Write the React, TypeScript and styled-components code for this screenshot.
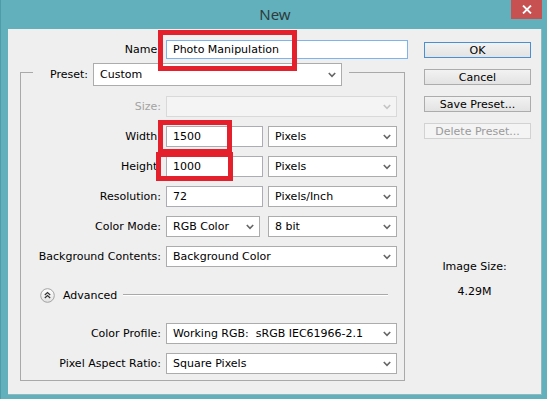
import React from 'react';
import styled, { createGlobalStyle } from 'styled-components';

const Global = createGlobalStyle`
  html, body { margin: 0; padding: 0; }
  body {
    background: #61b0bc;
    font-family: "DejaVu Sans", Verdana, sans-serif;
    font-size: 11px;
    color: #000;
  }
`;

const Frame = styled.div`
  width: 547px;
  height: 399px;
  box-sizing: border-box;
  background: #61b0bc;
  border-left: 1px solid #4f9ca8;
  padding: 0 5px 4px 7px;
  display: flex;
  flex-direction: column;
`;

const TitleBar = styled.div`
  height: 29px;
  flex: none;
  display: grid;
  grid-template-columns: 1fr auto 1fr;
  align-items: start;
`;

const Title = styled.div`
  grid-column: 2;
  font-family: "Noto Sans", "Open Sans", sans-serif;
  font-size: 15px;
  line-height: 20px;
  padding-top: 4px;
  color: #2f3b3d;
`;

const CloseButton = styled.div`
  grid-column: 3;
  justify-self: end;
  width: 31px;
  height: 19px;
  background: #c75050;
  display: flex;
  align-items: center;
  justify-content: center;
`;

const Client = styled.div`
  flex: 1;
  background: #efefef;
  border-right: 1px solid #8fb9bf;
  border-bottom: 1px solid #8fb9bf;
  display: flex;
  gap: 16px;
`;

const LeftColumn = styled.div`
  width: 400px;
  padding-left: 12px;
  box-sizing: border-box;
  display: flex;
  flex-direction: column;
`;

const NameRow = styled.div`
  margin-top: 11px;
  display: grid;
  grid-template-columns: 141px 242px;
  column-gap: 5px;
  align-items: center;
`;

const Label = styled.div<{ $disabled?: boolean }>`
  text-align: right;
  white-space: nowrap;
  color: ${p => (p.$disabled ? '#a3a3a3' : '#000')};
`;

const Marked = styled.div`
  position: relative;
`;

const Highlight = styled.span<{ $l: number; $t: number; $w: number; $h: number }>`
  position: absolute;
  left: ${p => p.$l}px;
  top: ${p => p.$t}px;
  width: ${p => p.$w}px;
  height: ${p => p.$h}px;
  box-sizing: border-box;
  border: 5px solid #e3202b;
  pointer-events: none;
`;

const TextInput = styled.input<{ $w?: number; $h?: number; $focus?: boolean }>`
  display: block;
  box-sizing: border-box;
  width: ${p => (p.$w ? `${p.$w}px` : '100%')};
  height: ${p => p.$h ?? 21}px;
  margin: 0;
  padding: 0 0 0 6px;
  border: 1px solid ${p => (p.$focus ? '#7eb4ea' : '#abadb3')};
  background: #fff;
  font-family: "DejaVu Sans", Verdana, sans-serif;
  font-size: 11px;
  color: #000;
  outline: none;
`;

const SelectBox = styled.div<{ $w?: number; $h?: number; $disabled?: boolean }>`
  box-sizing: border-box;
  width: ${p => (p.$w ? `${p.$w}px` : '100%')};
  height: ${p => p.$h ?? 21}px;
  display: flex;
  align-items: center;
  justify-content: space-between;
  padding: 0 5px 0 6px;
  background: ${p => (p.$disabled ? '#f4f4f4' : '#fff')};
  border: 1px solid ${p => (p.$disabled ? '#d9d9d9' : '#acacac')};
  white-space: pre;
`;

const Chevron = ({ light }: { light?: boolean }) => (
  <svg width="8" height="6" viewBox="0 0 8 6">
    <polyline
      points="0.8,1 4,4.4 7.2,1"
      fill="none"
      stroke={light ? '#c4c4c4' : '#666'}
      strokeWidth="1.6"
    />
  </svg>
);

const Select = ({ value, w, h, disabled }: { value: string; w?: number; h?: number; disabled?: boolean }) => (
  <SelectBox $w={w} $h={h} $disabled={disabled}>
    <span>{value}</span>
    <Chevron light={disabled} />
  </SelectBox>
);

const Group = styled.fieldset`
  margin: -1px 0 0 0;
  padding: 10px 7px 6px 0;
  width: 385px;
  box-sizing: border-box;
  border: 1px solid #a9a9a9;
  min-width: 0;
`;

const Legend = styled.legend`
  margin-left: 12px;
  padding: 5px 7px 0 17px;
  display: flex;
  align-items: center;
  gap: 5px;
`;

const Rows = styled.div`
  display: flex;
  flex-direction: column;
  gap: 9px;
`;

const FieldRow = styled.div`
  display: grid;
  grid-template-columns: 140px 231px;
  column-gap: 5px;
  align-items: center;
  height: 21px;
`;

const Pair = styled.div`
  display: flex;
  justify-content: space-between;
  align-items: center;
`;

const AdvancedRow = styled.div`
  height: 16px;
  margin: 11px 9px 11px 19px;
  display: flex;
  align-items: center;
`;

const AdvancedText = styled.span`
  margin-left: 8px;
  margin-right: 6px;
`;

const Rule = styled.div`
  flex: 1;
  height: 0;
  border-top: 1px solid #a9a9a9;
  border-bottom: 1px solid #fff;
`;

const RightColumn = styled.div`
  width: 107px;
  padding-top: 13px;
  display: flex;
  flex-direction: column;
`;

const Buttons = styled.div`
  display: flex;
  flex-direction: column;
  gap: 11px;
`;

const Button = styled.div<{ $default?: boolean; $disabled?: boolean }>`
  height: 16px;
  box-sizing: border-box;
  display: flex;
  align-items: center;
  justify-content: center;
  border: 1px solid ${p => (p.$default ? '#4b8fd1' : p.$disabled ? '#d2d2d2' : '#acacac')};
  background: ${p => (p.$disabled ? '#f4f4f4' : 'linear-gradient(#f2f2f2, #e3e3e3)')};
  color: ${p => (p.$disabled ? '#9a9a9a' : '#000')};
`;

const SizeInfo = styled.div`
  margin-top: 121px;
  padding-right: 6px;
  display: flex;
  flex-direction: column;
  align-items: center;
  gap: 11px;
  line-height: 14px;
`;

const AdvancedIcon = () => (
  <svg width="15" height="15" viewBox="0 0 15 15">
    <defs>
      <linearGradient id="adv" x1="0" y1="0" x2="0" y2="1">
        <stop offset="0" stopColor="#ffffff" />
        <stop offset="1" stopColor="#e2e2e2" />
      </linearGradient>
    </defs>
    <circle cx="7.5" cy="7.5" r="6.8" fill="url(#adv)" stroke="#a2a2a2" />
    <path d="M4.8 7 L7.5 4.5 L10.2 7 M4.8 10 L7.5 7.5 L10.2 10" fill="none" stroke="#333" strokeWidth="1.2" />
  </svg>
);

const CloseIcon = () => (
  <svg width="10" height="9" viewBox="0 0 10 9">
    <path d="M1 0.5 L9 8.5 M9 0.5 L1 8.5" stroke="#fff" strokeWidth="1.8" />
  </svg>
);

export default function App() {
  return (
    <>
      <Global />
      <Frame>
        <TitleBar>
          <Title>New</Title>
          <CloseButton>
            <CloseIcon />
          </CloseButton>
        </TitleBar>
        <Client>
          <LeftColumn>
            <NameRow>
              <Label>Name:</Label>
              <Marked>
                <TextInput $h={19} $focus readOnly value="Photo Manipulation" />
                <Highlight $l={-8} $t={-10} $w={139} $h={41} />
              </Marked>
            </NameRow>
            <Group>
              <Legend>
                <span>Preset:</span>
                <Select value="Custom" w={249} h={23} />
              </Legend>
              <Rows>
                <FieldRow>
                  <Label $disabled>Size:</Label>
                  <Select value="" disabled />
                </FieldRow>
                <FieldRow>
                  <Label>Width:</Label>
                  <Pair>
                    <Marked>
                      <TextInput $w={97} readOnly value="1500" />
                      <Highlight $l={-8} $t={-6} $w={74} $h={34} />
                    </Marked>
                    <Select value="Pixels" w={129} />
                  </Pair>
                </FieldRow>
                <FieldRow>
                  <Label>Height:</Label>
                  <Pair>
                    <Marked>
                      <TextInput $w={97} readOnly value="1000" />
                      <Highlight $l={-10} $t={-4} $w={77} $h={29} />
                    </Marked>
                    <Select value="Pixels" w={129} />
                  </Pair>
                </FieldRow>
                <FieldRow>
                  <Label>Resolution:</Label>
                  <Pair>
                    <TextInput $w={97} readOnly value="72" />
                    <Select value="Pixels/Inch" w={129} />
                  </Pair>
                </FieldRow>
                <FieldRow>
                  <Label>Color Mode:</Label>
                  <Pair>
                    <Select value="RGB Color" w={94} />
                    <Select value="8 bit" w={129} />
                  </Pair>
                </FieldRow>
                <FieldRow>
                  <Label>Background Contents:</Label>
                  <Select value="Background Color" />
                </FieldRow>
                <AdvancedRow>
                  <AdvancedIcon />
                  <AdvancedText>Advanced</AdvancedText>
                  <Rule />
                </AdvancedRow>
                <FieldRow>
                  <Label>Color Profile:</Label>
                  <Select value="Working RGB:  sRGB IEC61966-2.1" />
                </FieldRow>
                <FieldRow>
                  <Label>Pixel Aspect Ratio:</Label>
                  <Select value="Square Pixels" />
                </FieldRow>
              </Rows>
            </Group>
          </LeftColumn>
          <RightColumn>
            <Buttons>
              <Button $default>OK</Button>
              <Button>Cancel</Button>
              <Button>Save Preset...</Button>
              <Button $disabled>Delete Preset...</Button>
            </Buttons>
            <SizeInfo>
              <span>Image Size:</span>
              <span>4.29M</span>
            </SizeInfo>
          </RightColumn>
        </Client>
      </Frame>
    </>
  );
}
